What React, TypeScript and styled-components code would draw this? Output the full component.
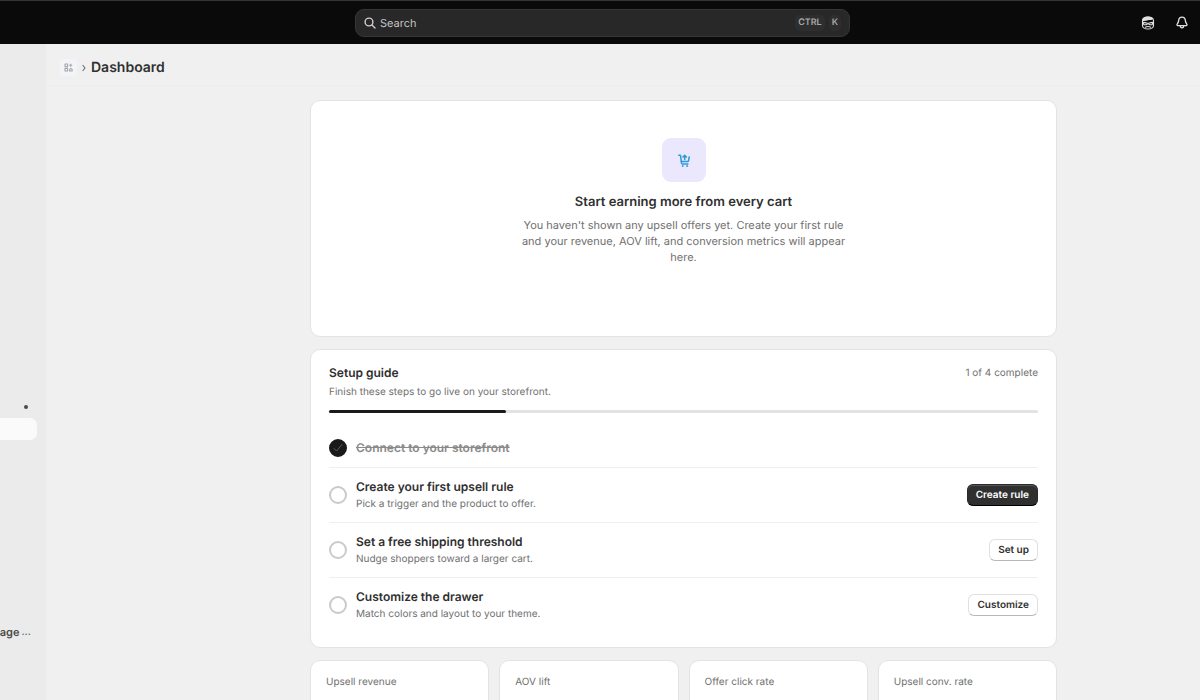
import React from 'react';
import styled, { createGlobalStyle, css } from 'styled-components';

const GlobalStyle = createGlobalStyle`
  *, *::before, *::after { box-sizing: border-box; }
  body {
    margin: 0;
    background: #f0f0f0;
    color: #303030;
    font-family: Inter, "Liberation Sans", sans-serif;
    font-size: 13px;
    text-rendering: geometricPrecision;
  }
  h1, h2, h3, p, ul { margin: 0; padding: 0; }
  ul { list-style: none; }
  button, input { font-family: inherit; text-rendering: inherit; }
`;

const Shell = styled.div`
  display: flex;
  flex-direction: column;
  height: 100vh;
  overflow: hidden;
`;

const TopBar = styled.header`
  display: grid;
  grid-template-columns: 1fr minmax(0, 495px) 1fr;
  align-items: center;
  flex: none;
  height: 44px;
  padding: 0 9px 0 14px;
  border-top: 1px solid #353535;
  background: #0a0a0a;
`;

const SearchBox = styled.label`
  grid-column: 2;
  display: flex;
  align-items: center;
  gap: 4px;
  height: 28px;
  padding: 0 8px;
  border: 1px solid #363636;
  border-radius: 9px;
  background: #282828;
  color: #d0d0d0;
`;

const SearchInput = styled.input`
  flex: 1;
  min-width: 0;
  padding: 0;
  border: 0;
  outline: 0;
  background: transparent;
  color: #e3e3e3;
  font-size: 11px;
  line-height: 16px;
  &::placeholder { color: #c4c4c4; opacity: 1; }
`;

const Key = styled.kbd`
  padding: 0 3px;
  border-radius: 5px;
  background: #2e2e2e;
  color: #a8a8a8;
  font-family: inherit;
  font-size: 9px;
  font-weight: 600;
  line-height: 16px;
`;

const TopActions = styled.div`
  display: flex;
  justify-content: flex-end;
  gap: 16px;
`;

const IconButton = styled.button`
  display: grid;
  place-items: center;
  width: 18px;
  height: 24px;
  padding: 0;
  border: 0;
  background: transparent;
  color: #e0e0e0;
`;

const Body = styled.div`
  display: flex;
  flex: 1;
  min-height: 0;
`;

const Sidebar = styled.nav`
  flex: none;
  width: 46px;
  padding-top: 352px;
  overflow: hidden;
  background: #ebebeb;
`;

const NavItem = styled.a<{ $active?: boolean }>`
  display: flex;
  align-items: center;
  justify-content: flex-end;
  gap: 2px;
  height: 22px;
  margin: 0 9px 0 0;
  padding-right: 6px;
  border-radius: 0 7px 7px 0;
  color: #4a4a4a;
  font-size: 11px;
  font-weight: 600;
  text-decoration: none;
  white-space: nowrap;
  ${({ $active }) => $active && css`background: #fafafa;`}
`;

const NavDot = styled.span`
  width: 4px;
  height: 4px;
  margin-right: 3px;
  border-radius: 50%;
  background: #4a4a4a;
`;

const NavFooter = styled.div`
  margin-top: 181px;
`;

const More = styled.span`
  color: #707070;
  font-size: 10px;
`;

const Main = styled.main`
  flex: 1;
  min-width: 0;
`;

const TitleBar = styled.div`
  display: flex;
  align-items: center;
  gap: 5px;
  height: 42px;
  padding: 6px 14px 0;
  border-bottom: 1px solid #ededed;
`;

const AppBadge = styled.a`
  display: grid;
  place-items: center;
  width: 17px;
  height: 17px;
  border-radius: 4px;
  background: #f3f4f7;
  color: #a3a6ad;
`;

const PageTitle = styled.h1`
  color: #303030;
  font-size: 14px;
  font-weight: 600;
  line-height: 20px;
`;

const Content = styled.div`
  display: grid;
  gap: 12px;
  padding: 14px 143px 0 264px;
`;

const Card = styled.section`
  border: 1px solid #e3e3e3;
  border-radius: 10px;
  background: #fff;
`;

const EmptyState = styled(Card)`
  display: flex;
  flex-direction: column;
  align-items: center;
  padding: 37px 18px 71px;
  text-align: center;
`;

const EmptyIcon = styled.div`
  display: grid;
  place-items: center;
  width: 44px;
  height: 44px;
  border-radius: 9px;
  background: #ebe7fd;
  color: #2a9bd8;
`;

const EmptyTitle = styled.h2`
  margin-top: 10px;
  font-size: 13px;
  font-weight: 600;
  line-height: 20px;
`;

const EmptyText = styled.p`
  max-width: 330px;
  margin-top: 5px;
  color: #707070;
  font-size: 11px;
  line-height: 16px;
`;

const GuideCard = styled(Card)`
  padding: 13px 18px 15px;
`;

const GuideHead = styled.div`
  display: flex;
  justify-content: space-between;
  align-items: center;
`;

const GuideTitle = styled.h2`
  font-size: 12px;
  font-weight: 600;
  line-height: 20px;
`;

const Note = styled.p`
  color: #707070;
  font-size: 10px;
  line-height: 18px;
`;

const StepNote = styled(Note)`
  line-height: 16px;
`;

const Track = styled.div`
  height: 3px;
  margin: 9px 0 15px;
  border-radius: 2px;
  background: #e3e3e3;
`;

const Fill = styled.div`
  height: 100%;
  border-radius: 2px;
  background: #1a1a1a;
`;

const Step = styled.li`
  display: flex;
  align-items: center;
  gap: 9px;
  min-height: 39px;
  padding: 10px 0;
  & + & { border-top: 1px solid #efefef; }
`;

const StepMark = styled.span<{ $done: boolean }>`
  display: grid;
  place-items: center;
  flex: none;
  width: 18px;
  height: 18px;
  border: 2px solid ${({ $done }) => ($done ? '#1a1a1a' : '#cacaca')};
  border-radius: 50%;
  background: ${({ $done }) => ($done ? '#1a1a1a' : '#fff')};
  color: #5c5c5c;
`;

const StepText = styled.div`
  flex: 1;
`;

const StepTitle = styled.h3<{ $done: boolean }>`
  color: ${({ $done }) => ($done ? '#8a8a8a' : '#303030')};
  font-size: 12px;
  font-weight: 600;
  line-height: 18px;
  text-decoration: ${({ $done }) => ($done ? 'line-through' : 'none')};
`;

const StepButton = styled.button<{ $primary?: boolean }>`
  height: 22px;
  padding: 0 8px;
  border: 1px solid #e0e0e0;
  border-bottom-color: #b8b8b8;
  border-radius: 6px;
  background: #fff;
  color: #303030;
  font-size: 10px;
  font-weight: 600;
  line-height: 16px;
  ${({ $primary }) => $primary && css`
    border-color: #2a2a2a;
    border-bottom-color: #000;
    background: #303030;
    box-shadow: inset 0 1px 0 #555;
    color: #fff;
  `}
`;

const Metrics = styled.div`
  display: grid;
  grid-template-columns: repeat(4, minmax(0, 1fr));
  gap: 10px;
`;

const MetricCard = styled(Card)`
  height: 90px;
  padding: 12px 15px;
`;

const steps = [
  { title: 'Connect to your storefront', done: true },
  { title: 'Create your first upsell rule', note: 'Pick a trigger and the product to offer.', action: 'Create rule', primary: true },
  { title: 'Set a free shipping threshold', note: 'Nudge shoppers toward a larger cart.', action: 'Set up' },
  { title: 'Customize the drawer', note: 'Match colors and layout to your theme.', action: 'Customize' },
];

const metrics = ['Upsell revenue', 'AOV lift', 'Offer click rate', 'Upsell conv. rate'];

const SearchIcon = () => (
  <svg width="12" height="12" viewBox="0 0 12 12" fill="none" stroke="currentColor" strokeWidth="1.4" strokeLinecap="round" aria-hidden="true">
    <circle cx="5" cy="5" r="3.9" />
    <path d="M8 8l3 3" />
  </svg>
);

const AssistantIcon = () => (
  <svg width="14" height="14" viewBox="0 0 14 14" fill="none" stroke="currentColor" strokeWidth="1.1" strokeLinejoin="round" aria-hidden="true">
    <path d="M1.500 4.500C1.800 2 4 1 7 1s5.200 1 5.500 3.500v5.500C12 12.400 10 13 7 13s-5-.600-5.500-3z" />
    <path d="M1.500 4.600C2 1.900 4 1 7 1c2 0 3.700.500 4.700 1.700C10.300 4 9 3 7.500 3.600 5.500 4.500 4 3.800 1.500 4.600z" fill="currentColor" />
    <path d="M1.500 6.300l2.500.300 3 .900 3-.900 2.500-.300M2.300 6.600l.500 2 2.400.200L7 7.500l1.800 1.300 2.400-.200.500-2" />
    <path d="M4.300 11.200c1.500-.700 3.900-.700 5.400 0" strokeLinecap="round" />
  </svg>
);

const BellIcon = () => (
  <svg width="12" height="13" viewBox="0 0 12 13" fill="none" stroke="currentColor" strokeWidth="1.3" strokeLinejoin="round" aria-hidden="true">
    <path d="M6 1.200c-2 0-3.200 1.400-3.300 3.200C2.600 6.200 2 7 1.200 8.100c-.500.700-.200 1.500.600 1.500h8.400c.800 0 1.100-.800.600-1.500C10 7 9.400 6.200 9.300 4.400 9.200 2.600 8 1.200 6 1.200z" />
    <path d="M4.300 9.800c0 1.300.700 2 1.700 2s1.700-.700 1.700-2" />
  </svg>
);

const AppIcon = () => (
  <svg width="9" height="9" viewBox="0 0 9 9" fill="none" stroke="currentColor" strokeWidth="1.100" strokeLinejoin="round" aria-hidden="true">
    <rect x="1" y="1" width="2.600" height="2.600" />
    <rect x="1" y="5.400" width="2.600" height="2.600" />
    <path d="M5.600 8V6.600l1.300-1.200 1.300 1.200V8z" />
    <path d="M6.700.800v3M5.200 2.300h3" />
  </svg>
);

const Chevron = () => (
  <svg width="4" height="8" viewBox="0 0 4 8" fill="none" stroke="#707070" strokeWidth="1.200" strokeLinecap="round" strokeLinejoin="round" aria-hidden="true">
    <path d="M1 1.500L3 4 1 6.500" />
  </svg>
);

const CartIcon = () => (
  <svg width="12" height="13" viewBox="0 0 12 13" fill="none" stroke="currentColor" strokeWidth="1.500" strokeLinecap="round" strokeLinejoin="round" aria-hidden="true">
    <path d="M.8 1.200h1.200c.400 0 .600.300.600.600l.700 5.700h6.300c.500 0 .800-.200.900-.700l.700-3.800" />
    <path d="M3.300 7.500l.200 1.700c.100.500.400.700.800.700h5.600" />
    <path d="M6.700 5.600V1.600M5 3l1.700-1.700L8.400 3" />
    <circle cx="4.600" cy="12" r=".5" fill="currentColor" strokeWidth=".8" />
    <circle cx="9" cy="12" r=".5" fill="currentColor" strokeWidth=".8" />
  </svg>
);

const CheckIcon = () => (
  <svg width="10" height="10" viewBox="0 0 10 10" fill="none" stroke="currentColor" strokeWidth="1" strokeLinecap="round" strokeLinejoin="round" aria-hidden="true">
    <path d="M1 5.500L3.500 8 9 1.500" />
  </svg>
);

export default function App() {
  return (
    <Shell>
      <GlobalStyle />
      <TopBar>
        <SearchBox>
          <SearchIcon />
          <SearchInput type="text" placeholder="Search" aria-label="Search" />
          <Key>CTRL</Key>
          <Key>K</Key>
        </SearchBox>
        <TopActions>
          <IconButton type="button" aria-label="Assistant"><AssistantIcon /></IconButton>
          <IconButton type="button" aria-label="Notifications"><BellIcon /></IconButton>
        </TopActions>
      </TopBar>
      <Body>
        <Sidebar aria-label="Main">
          <NavItem href="#apps" aria-label="Apps"><NavDot /></NavItem>
          <NavItem href="#dashboard" $active aria-label="Dashboard" />
          <NavFooter>
            <NavItem href="#page"><span>page</span><More>...</More></NavItem>
          </NavFooter>
        </Sidebar>
        <Main>
          <TitleBar>
            <AppBadge href="#app" aria-label="App home"><AppIcon /></AppBadge>
            <Chevron />
            <PageTitle>Dashboard</PageTitle>
          </TitleBar>
          <Content>
            <EmptyState>
              <EmptyIcon><CartIcon /></EmptyIcon>
              <EmptyTitle>Start earning more from every cart</EmptyTitle>
              <EmptyText>
                You haven't shown any upsell offers yet. Create your first rule and your revenue, AOV lift, and conversion metrics will appear here.
              </EmptyText>
            </EmptyState>
            <GuideCard>
              <GuideHead>
                <GuideTitle>Setup guide</GuideTitle>
                <Note>1 of 4 complete</Note>
              </GuideHead>
              <Note>Finish these steps to go live on your storefront.</Note>
              <Track><Fill style={{ width: `${(steps.filter((s) => s.done).length / steps.length) * 100}%` }} /></Track>
              <ul>
                {steps.map((s) => (
                  <Step key={s.title}>
                    <StepMark $done={!!s.done}>{s.done && <CheckIcon />}</StepMark>
                    <StepText>
                      <StepTitle $done={!!s.done}>{s.title}</StepTitle>
                      {s.note && <StepNote>{s.note}</StepNote>}
                    </StepText>
                    {s.action && <StepButton type="button" $primary={s.primary}>{s.action}</StepButton>}
                  </Step>
                ))}
              </ul>
            </GuideCard>
            <Metrics>
              {metrics.map((m) => (
                <MetricCard key={m}><Note>{m}</Note></MetricCard>
              ))}
            </Metrics>
          </Content>
        </Main>
      </Body>
    </Shell>
  );
}
